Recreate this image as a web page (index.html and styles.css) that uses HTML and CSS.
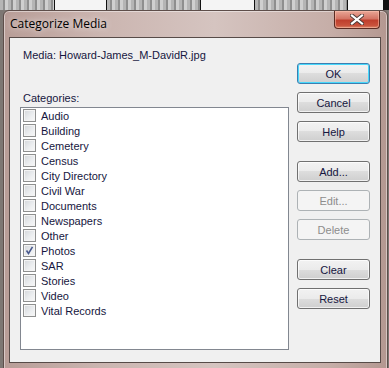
FILE: index.html
```html
<!DOCTYPE html>
<html lang="en">
<head>
  <meta charset="UTF-8" />
  <meta name="viewport" content="width=device-width, initial-scale=1.0" />
  <title>Categorize Media</title>
  <link rel="stylesheet" href="styles.css">
</head>
<body>

  <div class="thumbs">
    <div class="thumb thumb-photo" style="width:55px"></div>
    <div class="thumb" style="width:52px"></div>
    <div class="thumb thumb-photo" style="width:94px"></div>
    <div class="thumb" style="width:54px"></div>
    <div class="thumb thumb-photo" style="width:93px"></div>
    <div class="thumb" style="width:36px"></div>
  </div>

  <div class="window">
    <div class="titlebar">
      <span class="title">Categorize Media</span>
      <button class="close-btn" title="Close">
        <svg width="14" height="11" viewBox="0 0 14 11">
          <path d="M2 1.5 L12 9.5 M12 1.5 L2 9.5" stroke="#4a3a36" stroke-width="4" stroke-linecap="square" />
          <path d="M2 1.5 L12 9.5 M12 1.5 L2 9.5" stroke="#ffffff" stroke-width="2.2" stroke-linecap="square" />
        </svg>
      </button>
    </div>

    <div class="client">
      <div class="main-col">
        <p class="media-label">Media: Howard-James_M-DavidR.jpg</p>
        <p class="cat-label">Categories:</p>
        <ul class="cat-list">
          <li><span class="box"></span>Audio</li>
          <li><span class="box"></span>Building</li>
          <li><span class="box"></span>Cemetery</li>
          <li><span class="box"></span>Census</li>
          <li><span class="box"></span>City Directory</li>
          <li><span class="box"></span>Civil War</li>
          <li><span class="box"></span>Documents</li>
          <li><span class="box"></span>Newspapers</li>
          <li><span class="box"></span>Other</li>
          <li><span class="box checked">
            <svg width="9" height="9" viewBox="0 0 9 9">
              <path d="M1.5 4.5 L3.5 7.5 L7.5 0.8" fill="none" stroke="#4a5a8e" stroke-width="1.6" />
            </svg>
          </span>Photos</li>
          <li><span class="box"></span>SAR</li>
          <li><span class="box"></span>Stories</li>
          <li><span class="box"></span>Video</li>
          <li><span class="box"></span>Vital Records</li>
        </ul>
      </div>

      <div class="btn-col">
        <div class="btn-group">
          <button class="btn btn-default">OK</button>
          <button class="btn">Cancel</button>
          <button class="btn">Help</button>
        </div>
        <div class="btn-group">
          <button class="btn">Add...</button>
          <button class="btn" disabled>Edit...</button>
          <button class="btn" disabled>Delete</button>
        </div>
        <div class="btn-group">
          <button class="btn">Clear</button>
          <button class="btn">Reset</button>
        </div>
      </div>
    </div>
  </div>

</body>
</html>
```

FILE: styles.css
```css
* {
  box-sizing: border-box;
  margin: 0;
  padding: 0;
}

body {
  background: #7d7773;
  font-family: 'Liberation Sans', Arial, sans-serif;
  font-size: 11px;
  color: #161640;
  width: 389px;
  height: 368px;
  overflow: hidden;
}

/* strip of photo thumbnails behind the dialog */
.thumbs {
  display: flex;
  height: 10px;
  background: #111;
}

.thumb {
  height: 10px;
  background: #f4f4f4;
  border-right: 1px solid #111;
}

.thumb-photo {
  background: repeating-linear-gradient(90deg, #b5b5b5 0 3px, #8e8e8e 3px 5px, #cfcfcf 5px 8px);
}

/* window frame */
.window {
  margin-left: 3px;
  width: 385px;
  height: 362px;
  border: 1px solid #5e4e4a;
  border-radius: 6px 6px 0 0;
  background: linear-gradient(90deg, #b89d97 0%, #cbb5b0 25%, #d5c4c0 55%, #c6aea8 85%, #b49891 100%);
  padding: 0 6px 0 5px;
  box-shadow: inset 0 0 0 1px rgba(255, 255, 255, 0.45);
}

.titlebar {
  height: 26px;
  display: flex;
  justify-content: space-between;
  align-items: flex-start;
}

.title {
  font-family: 'Open Sans', 'Liberation Sans', sans-serif;
  font-size: 12px;
  color: #000;
  margin: 4px 0 0 1px;
  text-shadow: 0 0 6px rgba(255, 255, 255, 0.9);
}

.close-btn {
  width: 46px;
  height: 18px;
  margin-right: 1px;
  border: 1px solid #5b2b22;
  border-top: none;
  border-radius: 0 0 4px 4px;
  background: linear-gradient(180deg, #e9a696 0%, #d47565 45%, #bf3f2d 55%, #c9523c 85%, #d98a6d 100%);
  box-shadow: inset 0 0 0 1px rgba(255, 200, 180, 0.5);
  display: flex;
  align-items: center;
  justify-content: center;
}

/* dialog body */
.client {
  height: 326px;
  border: 1px solid #574b48;
  background: #f0f0f0;
  display: flex;
  gap: 8px;
  padding: 10px 10px 12px 10px;
}

.main-col {
  width: 270px;
  display: flex;
  flex-direction: column;
}

.media-label,
.cat-label {
  line-height: 14px;
  margin-left: 3px;
}

.cat-label {
  margin-top: 29px;
  margin-bottom: 2px;
}

.cat-list {
  list-style: none;
  flex: 1;
  background: #fff;
  border: 1px solid #828790;
  padding: 0 0 0 2px;
}

.cat-list li {
  height: 15px;
  display: flex;
  align-items: center;
  gap: 5px;
}

.box {
  width: 13px;
  height: 13px;
  border: 1px solid #8e8f8f;
  background: linear-gradient(135deg, #d3d6da 0%, #eceef0 60%, #f8f8f8 100%);
  box-shadow: inset 0 0 0 1px #f4f4f4;
  display: flex;
  align-items: center;
  justify-content: center;
}

/* buttons */
.btn-col {
  width: 73px;
  padding-top: 15px;
  display: flex;
  flex-direction: column;
  gap: 19px;
}

.btn-group {
  display: flex;
  flex-direction: column;
  gap: 8px;
}

.btn {
  height: 21px;
  width: 73px;
  font-family: 'Liberation Sans', Arial, sans-serif;
  font-size: 11px;
  color: #161640;
  border: 1px solid #707070;
  border-radius: 3px;
  background: linear-gradient(180deg, #f2f2f2 0%, #ebebeb 50%, #dddddd 50%, #cfcfcf 100%);
  box-shadow: inset 0 0 0 1px rgba(255, 255, 255, 0.7);
}

.btn-default {
  border-color: #3c7fb1;
  box-shadow: inset 0 0 0 1px #48d8fb;
}

.btn:disabled {
  color: #8d8d8d;
  border-color: #adb2b5;
  background: #f4f4f4;
  box-shadow: none;
}
```
